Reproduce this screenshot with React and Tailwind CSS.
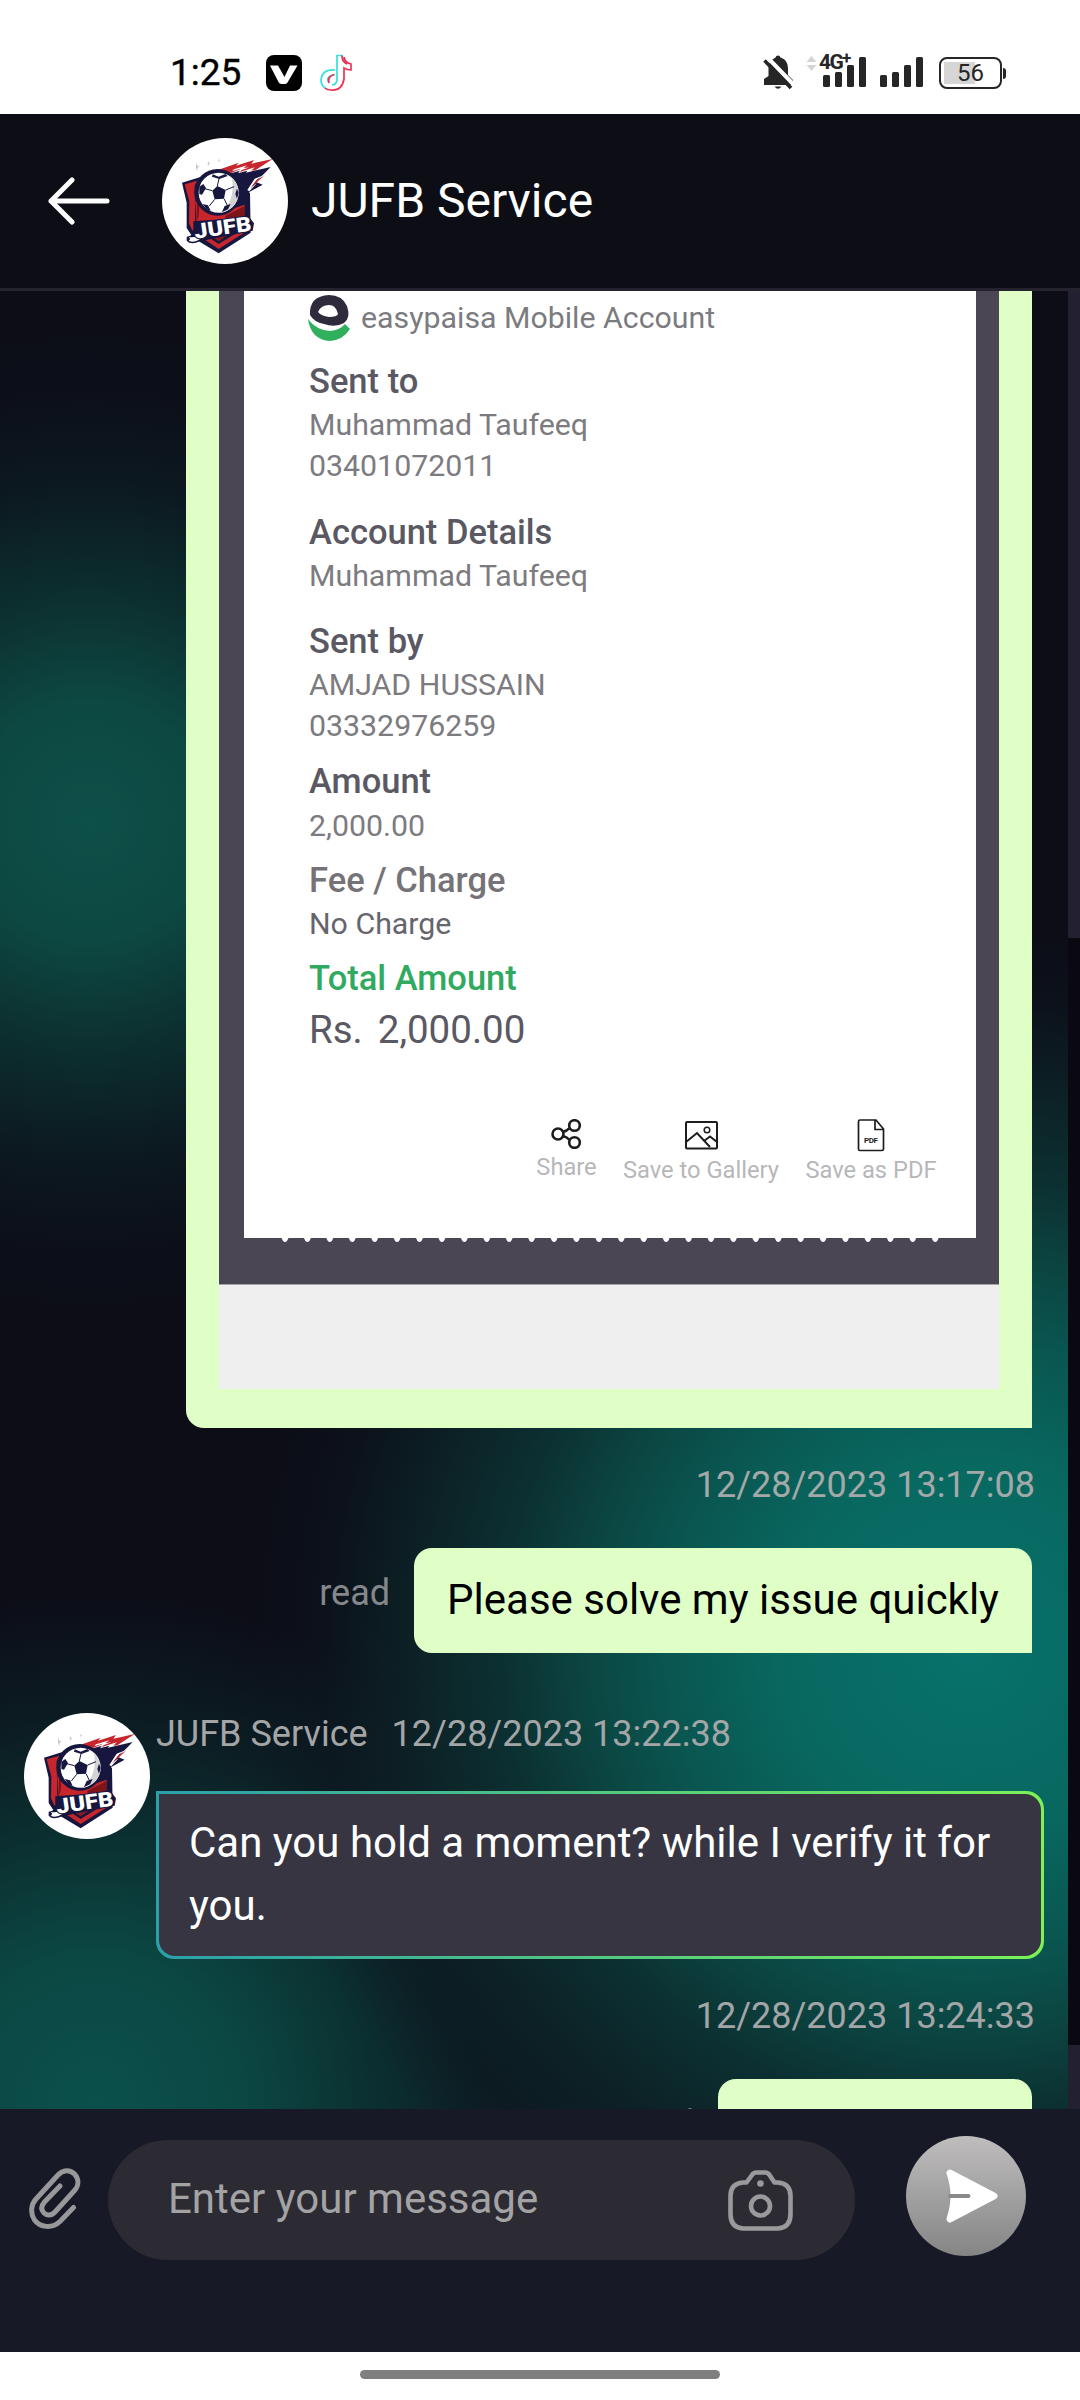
import React from "react";

function CrestLogo() {
  return (
    <div className="h-[126px] w-[126px] shrink-0 overflow-hidden rounded-full bg-white">
      <svg viewBox="6 6 378 378" className="block h-full w-full">
        <g fill="#c9c9cc">
          <path d="M108 79l4 10 7 2-6 4-1 11-4-10z" />
          <path d="M144 74l3 6 5 2-5 2-2 7-2-8z" />
          <path d="M176 67l2 5 4 1-4 2-1 5-2-6z" />
        </g>
        {/* fire trail */}
        <path d="M205 114L240 104L234 112L262 104L258 110L332 93L288 138L308 146L268 168L256 196L226 214L190 150z" fill="#17163f" />
        <path d="M174 102L236 80L228 89L282 72L274 83L338 69L286 103L274 104L284 94L240 108L248 97L206 114z" fill="#c6262c" />
        <path d="M222 100L262 88L250 97L268 94L236 106L242 98L216 106z" fill="#fff" />
        <path d="M314 116L292 130L276 150L290 142L268 166L262 162L284 128z" fill="#fff" />
        <path d="M314 118L288 134L270 158L294 136z" fill="#c6262c" />
        {/* shield */}
        <path d="M66 140L124 122L190 160L270 170L272 290L176 352L100 306L80 276L80 200z" fill="#17163f" />
        <path d="M74 145L112 134L104 150L106 262L112 290L96 282L87 262L88 196z" fill="#c6262c" />
        <path d="M110 148L130 140L200 224L254 206L252 262L176 270L110 264L106 200z" fill="#c6262c" />
        <path d="M112 146L122 142L116 240L110 256z" fill="#7b1519" />
        <path d="M196 240L254 210L252 262L196 262z" fill="#7b1519" />
        <path d="M118 300L176 339L262 284L240 284L176 324L140 300z" fill="#c6262c" />
        <path d="M150 300L176 316L208 294z" fill="#8d191e" />
        {/* ball */}
        <circle cx="173" cy="169" r="70" fill="#17163f" />
        <circle cx="176" cy="170" r="60" fill="#fff" />
        <path d="M216 126A60 60 0 0 1 180 230Q226 200 216 126z" fill="#d4d4d6" />
        <path d="M172 150L197 162L192 188L164 190L157 164z" fill="#17163f" />
        <path d="M158 115L176 122L196 114L203 120L178 129L156 122zM118 152L130 144L138 156L126 176L118 174zM128 204L144 208L152 224L140 220zM186 228L194 210L212 204L204 220zM226 174L231 158L236 170L231 188z" fill="#17163f" />
        <path d="M172 150L177 128M197 162L222 152M192 188L202 208M164 190L148 210M157 164L134 158" stroke="#17163f" strokeWidth="3" />
        {/* lettering */}
        <path d="M80 302Q94 300 100 290L100 256L268 244L282 262L278 284L120 316Q92 328 80 314z" fill="#17163f" />
        <path d="M86 303Q100 306 112 300L122 308Q102 322 86 314Q94 310 86 303z" fill="#fff" />
        <text
          x="106"
          y="308"
          transform="rotate(-8 106 308)"
          textLength="172"
          lengthAdjust="spacingAndGlyphs"
          fontFamily="Roboto, sans-serif"
          fontWeight="900"
          fontSize="62"
          fill="#fff"
          stroke="#17163f"
          strokeWidth="6"
          paintOrder="stroke"
        >
          JUFB
        </text>
      </svg>
    </div>
  );
}

function Bars({ tops }) {
  return (
    <svg width="43" height="30" viewBox="0 0 43 30" fill="#262626">
      {tops.map((h, i) => (
        <rect key={i} x={i * 12} y={30 - h} width="7" height={h} rx="1.5" />
      ))}
    </svg>
  );
}

function StatusBar() {
  return (
    <div className="flex h-[114px] shrink-0 items-start bg-white">
      <div className="flex items-center pl-[170px] pt-[50px]">
        <span className="w-[96px] text-[37px] leading-[46px] font-normal text-black [-webkit-text-stroke:0.4px_#000]">1:25</span>
        <svg width="36" height="36" viewBox="0 0 36 36">
          <rect width="36" height="36" rx="8" fill="#000" />
          <path d="M4 10.500H12L18.500 22L24 10.500H31.500L21.500 27.500Q20.500 29 18.500 29H15.500Q13.500 29 12.500 27z" fill="#fff" />
        </svg>
        <svg className="ml-[18px]" width="33" height="38" viewBox="0 0 33 38" fill="none" strokeWidth="1.700">
          <path d="M15 16Q2 15 1 26Q1 31 5 34M9 29Q5 22 15 20.500M17 1V26Q16 31 12 31M17 1.500H22Q23 8 27 10" stroke="#37dfe0" />
          <path d="M24 3Q25 9 31 10V16Q27 16 24 14V25Q22 37 11 36Q7 36 5 34M9 29Q7 23 14 20.500M22 1.500Q22 8 27 10" stroke="#ee3358" />
        </svg>
      </div>
      <div className="ml-auto flex pr-[74px] pt-[55px]">
        <svg width="31" height="35" viewBox="0 0 31 35">
          <path d="M15 0.500Q17 0.500 17.500 2.500Q25 5 25 13V20L30 25V30H1V24L5.500 21V13Q5.500 6 12.500 2.500Q13 0.500 15 0.500z" fill="#262626" />
          <path d="M11.500 31.500H18.500Q15 36 11.500 31.500z" fill="#262626" />
          <path d="M4 2L31 30" stroke="#fff" strokeWidth="4" />
          <path d="M1.500 5.500L28 33" stroke="#262626" strokeWidth="3.600" />
        </svg>
        <svg className="ml-[12px]" width="11" height="18" viewBox="0 0 11 18" fill="#d4d4d4">
          <path d="M0.500 7L5.500 1L10.500 7zM0.500 10H10.500L5.500 16z" />
        </svg>
        <div className="relative ml-[6px] mt-[2px] h-[30px] w-[43px]">
          <Bars tops={[12, 15, 22, 30]} />
          <span className="absolute left-[-4px] top-[-4px] text-[21px] leading-[18px] font-bold tracking-[-1.5px] text-[#262626]">
            4G
          </span>
          <span className="absolute left-[19px] top-[-7px] text-[17px] leading-[16px] font-bold text-[#262626]">+</span>
        </div>
        <div className="ml-[14px] mt-[2px]">
          <Bars tops={[12, 15, 22, 30]} />
        </div>
        <div className="ml-[16px] mt-[2px] flex h-[32px] items-center">
          <div className="flex h-[32px] w-[63px] items-center justify-center rounded-[8px] border-2 border-[#262626] bg-[linear-gradient(#d6d6d6,#d6d6d6)] bg-[length:31px_22px] bg-[position:3px_3px] bg-no-repeat text-[24px] leading-[28px] text-[#262626]">
            56
          </div>
          <div className="ml-px h-[11px] w-[3px] rounded-r bg-[#262626]" />
        </div>
      </div>
    </div>
  );
}

function Header() {
  return (
    <div className="flex h-[177px] shrink-0 items-center border-b-[3px] border-[#25242e] bg-[#0d0d16]">
      <svg className="ml-[47px] mr-[51px]" width="64" height="48" viewBox="0 0 64 48" fill="none" stroke="#fff" strokeWidth="5" strokeLinecap="round" strokeLinejoin="round">
        <path d="M60 24H4M25 3L4 24L25 45" />
      </svg>
      <CrestLogo />
      <h1 className="ml-[23px] text-[48px] font-normal leading-[54px] text-white">JUFB Service</h1>
    </div>
  );
}

function Heading({ className, children }) {
  return <div className={`text-[34.5px] leading-[40px] font-medium ${className}`}>{children}</div>;
}

function Value({ className, children }) {
  return <div className={`text-[30.3px] leading-[40px] ${className}`}>{children}</div>;
}

function Receipt() {
  return (
    <div className="h-[1098px] w-[780px] bg-[#efefef]">
      <div className="h-[994px] border-b border-[#a5a3aa] bg-[#4a4653] pl-[25px]">
        <div className="relative h-[947px] w-[732px] bg-white pl-[65px]">
          <div className="flex pt-[4px]">
            <svg width="43" height="46" viewBox="0 0 43 46" className="-ml-px">
              <path fillRule="evenodd" d="M21 0Q34 0 39 11Q43 23 36 28Q27 33 16 29Q6 27 2 20Q1 1 21 0zM21 10Q13 10 10 17Q13 21 21 22Q29 22 30 19Q28 10 21 10z" fill="#2f2b3c" />
              <path d="M0 24Q8 35 22 36Q32 35 37 29L42 34Q35 45 22 46Q3 45 0 24z" fill="#30b05d" />
            </svg>
            <Value className="ml-[10px] mt-[3px] text-[#7c7b7f]">easypaisa Mobile Account</Value>
          </div>
          <Heading className="mt-[20px] text-[#5a5862]">Sent to</Heading>
          <Value className="mt-[4px] text-[#7c7b7f]">Muhammad Taufeeq</Value>
          <Value className="mt-[1px] text-[#7c7b7f]">03401072011</Value>
          <Heading className="mt-[26px] text-[#5a5862]">Account Details</Heading>
          <Value className="mt-[4px] text-[#7c7b7f]">Muhammad Taufeeq</Value>
          <Heading className="mt-[25px] text-[#5a5862]">Sent by</Heading>
          <Value className="mt-[4px] text-[#7c7b7f]">AMJAD HUSSAIN</Value>
          <Value className="mt-[1px] text-[#7c7b7f]">03332976259</Value>
          <Heading className="mt-[15px] text-[#5a5862]">Amount</Heading>
          <Value className="mt-[5px] text-[#7c7b7f]">2,000.00</Value>
          <Heading className="mt-[14px] text-[#757377]">Fee / Charge</Heading>
          <Value className="mt-[4px] text-[#66646c]">No Charge</Value>
          <Heading className="mt-[14px] text-[#30aa60]">Total Amount</Heading>
          <div className="mt-[12px] flex gap-[15px] text-[38.5px] leading-[40px] text-[#5a5862]">
            <span>Rs.</span>
            <span>2,000.00</span>
          </div>
          <div className="mt-[69px] flex text-[23.700px] leading-[28px] text-[#b7b7ba]">
            <div className="ml-[227px] flex w-[61px] flex-col items-center">
              <svg width="31" height="30" viewBox="0 0 31 30" fill="none" stroke="#1d1d1f" strokeWidth="2.600">
                <circle cx="7" cy="15" r="5.500" />
                <circle cx="23.500" cy="6.500" r="5.300" />
                <circle cx="23.500" cy="23.500" r="5.300" />
                <path d="M12 13Q16 12 18.500 9M12 17Q16 18 18.500 21" />
              </svg>
              <span className="mt-[4px]">Share</span>
            </div>
            <div className="ml-[26px] flex w-[156px] flex-col items-center whitespace-nowrap">
              <svg width="33" height="31" viewBox="0 0 33 31" fill="none" stroke="#1d1d1f" strokeWidth="2">
                <rect x="1" y="3" width="31" height="26.500" rx="1" />
                <path d="M1 23L12 14L25 28M19 22L25 17.500L32 23" />
                <circle cx="22" cy="11" r="2.800" strokeWidth="1.500" />
              </svg>
              <span className="mt-[6px]">Save to Gallery</span>
            </div>
            <div className="ml-[26px] flex w-[132px] flex-col items-center whitespace-nowrap">
              <svg width="28" height="33" viewBox="0 0 28 33">
                <path d="M3 1H19L26.500 10V30Q26.500 31.500 25 31.500H3Q1.500 31.500 1.500 30V2.500Q1.500 1 3 1zM18 1V10.500H26.500" fill="none" stroke="#1d1d1f" strokeWidth="1.700" />
                <text x="7" y="24" fontFamily="Roboto, sans-serif" fontWeight="700" fontSize="8" textLength="14" fill="#1d1d1f">PDF</text>
              </svg>
              <span className="mt-[4px]">Save as PDF</span>
            </div>
          </div>
          {/* perforated lower edge */}
          <svg className="absolute left-0 top-full" width="732" height="5" viewBox="0 0 732 5" fill="#fff">
            {Array.from({ length: 30 }, (_, i) => (
              <path key={i} d={`M${37.500 + i * 22.420} 0h7l-1.500 3q-2 2 -4 0z`} />
            ))}
          </svg>
        </div>
      </div>
    </div>
  );
}

function Chat() {
  return (
    <div className="flex h-[1818px] shrink-0 overflow-hidden">
      <div className="flex w-[1068px] flex-col overflow-hidden bg-[#0c0d17] bg-[radial-gradient(circle_500px_at_90px_530px,#0d5049_0%,#0d4842_24%,rgba(12,52,50,0.85)_46%,rgba(12,32,37,0.6)_68%,rgba(12,22,30,0.3)_85%,rgba(12,20,28,0)_100%),radial-gradient(ellipse_720px_720px_at_970px_1355px,#07726b_0%,#086860_26%,#0a5651_42%,rgba(11,71,67,0.98)_53%,rgba(12,50,51,0.95)_65%,rgba(12,34,38,0.85)_79%,rgba(12,22,30,0.45)_90%,rgba(12,18,26,0)_100%),radial-gradient(circle_510px_at_95px_1810px,#0b504c_0%,#0b4844_28%,rgba(11,50,50,0.9)_54%,rgba(12,32,38,0.75)_76%,rgba(13,20,30,0)_100%),radial-gradient(circle_560px_at_560px_1850px,#0d1d25_0%,#0d1b23_50%,rgba(13,20,30,0)_100%)]">
        <div className="ml-[186px] h-[1137px] w-[846px] shrink-0 rounded-bl-[18px] bg-[#dfffc7] pl-[33px]">
          <Receipt />
        </div>
        <div className="mt-[36px] w-[1035px] text-right text-[36px] leading-[42px] text-[#a3a8a8]">12/28/2023 13:17:08</div>
        <div className="mt-[42px] flex w-[1032px] items-start justify-end">
          <span className="mr-[24px] mt-[24px] text-[36px] leading-[42px] text-[#85888b]">read</span>
          <div className="h-[105px] rounded-t-[18px] rounded-bl-[18px] bg-[#dfffc7] px-[33px] pt-[20px] text-[42px] leading-[63px] text-black">
            Please solve my issue quickly
          </div>
        </div>
        <div className="mt-[60px] flex pl-[24px]">
          <CrestLogo />
          <div className="ml-[6px]">
            <div className="flex gap-[24px] text-[36px] leading-[42px] text-[#a3a5a7]">
              <span>JUFB Service</span>
              <span>12/28/2023 13:22:38</span>
            </div>
            <div className="mt-[36px] h-[168px] w-[888px] rounded-r-[18px] rounded-bl-[18px] bg-[linear-gradient(90deg,#2b9faa,#7cf257)] p-[3px]">
              <div className="h-full rounded-r-[16px] rounded-bl-[16px] bg-[#373542] px-[30px] pt-[17px] text-[42px] leading-[63px] text-white">
                Can you hold a moment? while I verify it for you.
              </div>
            </div>
          </div>
        </div>
        <div className="mt-[36px] w-[1035px] text-right text-[36px] leading-[42px] text-[#a3a5a7]">12/28/2023 13:24:33</div>
        <div className="mt-[42px] flex w-[1032px] justify-end">
          <span className="mr-[24px] mt-[24px] text-[36px] leading-[42px] text-[#85888b]">read</span>
          <div className="h-[105px] w-[314px] rounded-t-[18px] bg-[#dfffc7]" />
        </div>
      </div>
      <div className="flex w-[12px] flex-col bg-[#0a0911]">
        <div className="h-[647px] bg-[#232131]" />
        <div className="mt-auto h-[64px] bg-[#232131]" />
      </div>
    </div>
  );
}

function Composer() {
  return (
    <div className="flex h-[243px] shrink-0 items-start bg-[#171926]">
      <svg className="ml-[29px] mt-[59px]" width="52" height="61" viewBox="0 0 52 61" fill="none" stroke="#98989b" strokeWidth="5" strokeLinecap="round">
        <path d="M44.500 39.500L31 53.500C23 61 11 59.500 5.500 52C1 45 2 36.500 7 31L29 7C34 1.500 41 1.500 45.500 6C50 11 50 17.500 45.500 22.500L26 44C22.500 48 17.500 47.500 15 45C12 42 12 38 15.500 34L31 18" />
      </svg>
      <div className="ml-[27px] mt-[31px] flex h-[120px] w-[747px] items-center rounded-full bg-[#2c2b33]">
        <span className="ml-[60px] -mt-[2px] text-[42px] leading-[50px] text-[#a3a3a6]">Enter your message</span>
        <svg className="ml-auto mr-[62px]" width="65" height="61" viewBox="0 0 65 61" fill="none" stroke="#9a9a9c" strokeWidth="4.600">
          <path d="M15 12.500H18.500L24 5Q25.500 2.500 28.500 2.500H37Q40 2.500 41.500 5L46.500 12.500H50Q62.500 13.500 62.500 26V44Q62.500 57.500 50 58.500H15Q2.500 57.500 2.500 44V26Q2.500 13.500 15 12.500z" strokeLinejoin="round" />
          <circle cx="32.500" cy="36" r="9.500" />
          <circle cx="32.500" cy="13.500" r="3.300" fill="#9a9a9c" stroke="none" />
        </svg>
      </div>
      <div className="ml-[51px] mt-[27px] flex h-[120px] w-[120px] items-center justify-center rounded-full bg-[linear-gradient(180deg,#bfbdbe,#858585)]">
        <svg className="ml-[12px]" width="52" height="54" viewBox="0 0 52 54">
          <path d="M4 4L48 27L4 50Q8 38 8 27Q8 16 4 4z" fill="#fff" stroke="#fff" strokeWidth="7" strokeLinejoin="round" />
          <path d="M4 27H22.500" stroke="#8b8a8a" strokeWidth="4" strokeLinecap="round" />
        </svg>
      </div>
    </div>
  );
}

export default function App() {
  return (
    <div className="flex h-[2400px] w-[1080px] flex-col overflow-hidden bg-white font-[Roboto,sans-serif]">
      <StatusBar />
      <Header />
      <Chat />
      <Composer />
      <div className="flex h-[48px] shrink-0 justify-center bg-white pt-[18px]">
        <div className="h-[9px] w-[360px] rounded-full bg-[#7f7f7f]" />
      </div>
    </div>
  );
}
